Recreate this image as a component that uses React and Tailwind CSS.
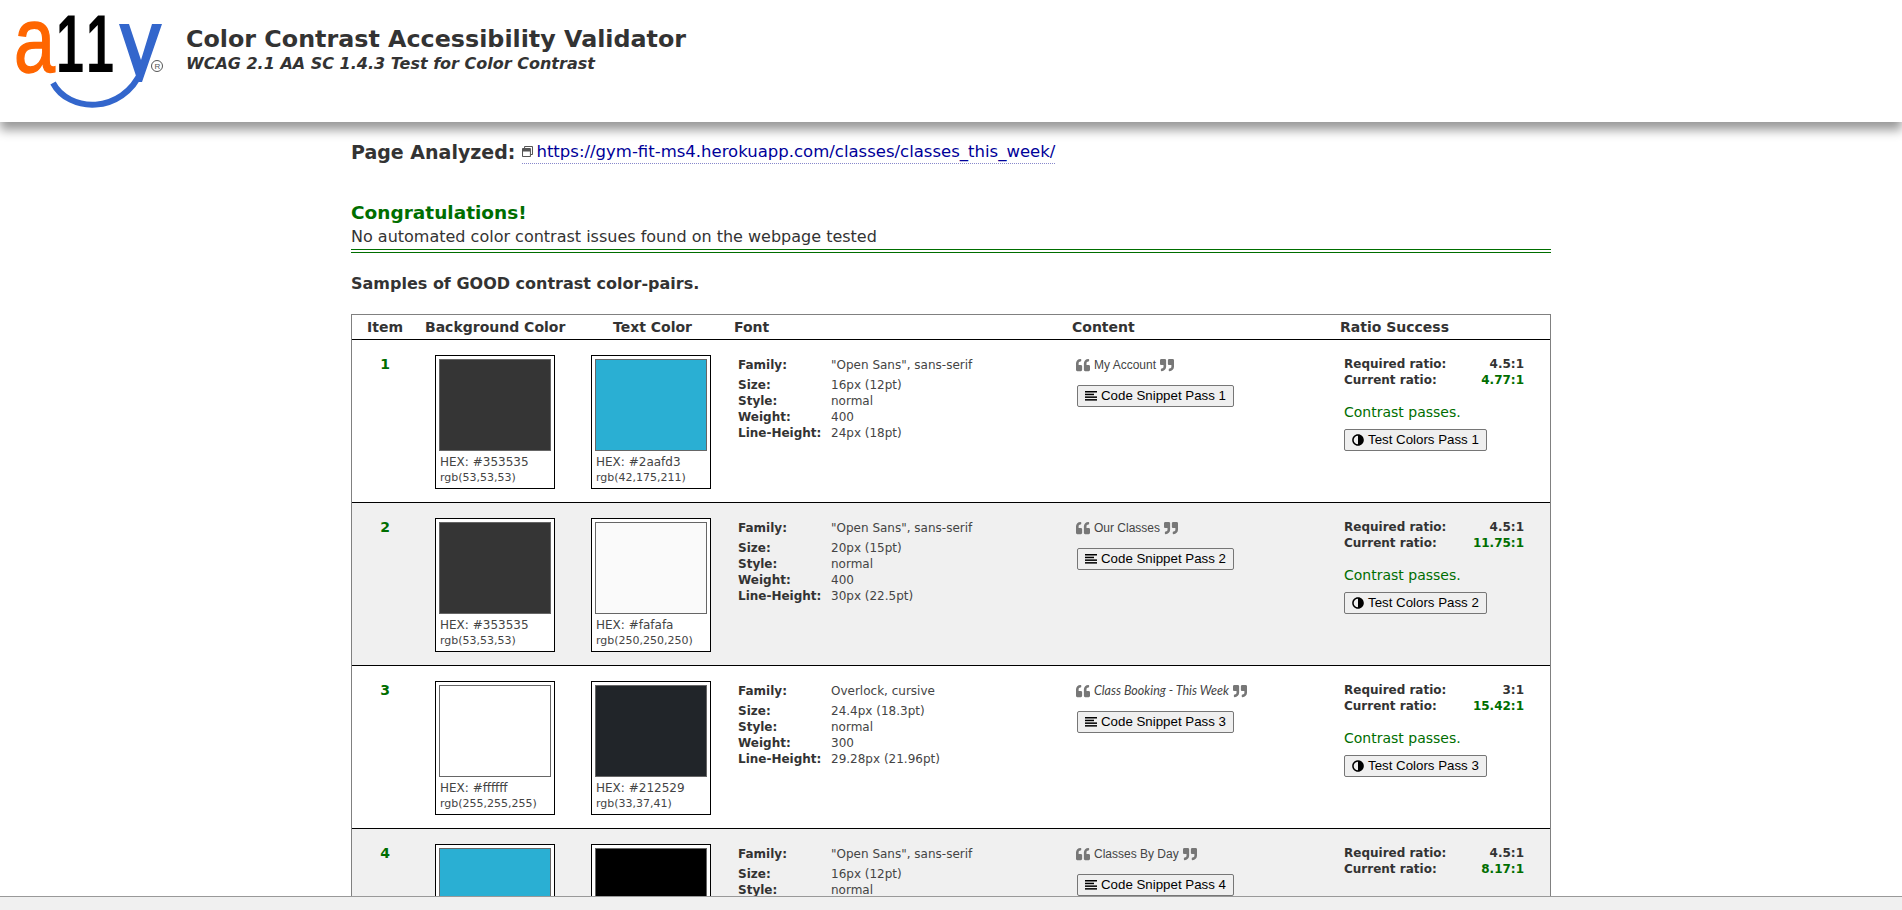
import { FaAdjust, FaQuoteLeft, FaQuoteRight, FaRegWindowRestore } from 'react-icons/fa'

const rows = [
  {
    id: 1,
    bg: { hex: '#353535', rgb: 'rgb(53,53,53)', swatch: 'bg-[#353535]' },
    fg: { hex: '#2aafd3', rgb: 'rgb(42,175,211)', swatch: 'bg-[#2aafd3]' },
    family: '"Open Sans", sans-serif',
    size: '16px (12pt)',
    weight: '400',
    lineHeight: '24px (18pt)',
    content: 'My Account',
    required: '4.5:1',
    current: '4.77:1',
  },
  {
    id: 2,
    bg: { hex: '#353535', rgb: 'rgb(53,53,53)', swatch: 'bg-[#353535]' },
    fg: { hex: '#fafafa', rgb: 'rgb(250,250,250)', swatch: 'bg-[#fafafa]' },
    family: '"Open Sans", sans-serif',
    size: '20px (15pt)',
    weight: '400',
    lineHeight: '30px (22.5pt)',
    content: 'Our Classes',
    required: '4.5:1',
    current: '11.75:1',
  },
  {
    id: 3,
    bg: { hex: '#ffffff', rgb: 'rgb(255,255,255)', swatch: 'bg-[#ffffff]' },
    fg: { hex: '#212529', rgb: 'rgb(33,37,41)', swatch: 'bg-[#212529]' },
    family: 'Overlock, cursive',
    size: '24.4px (18.3pt)',
    weight: '300',
    lineHeight: '29.28px (21.96pt)',
    content: 'Class Booking - This Week',
    cursive: true,
    required: '3:1',
    current: '15.42:1',
  },
  {
    id: 4,
    bg: { hex: '#2aafd3', rgb: 'rgb(42,175,211)', swatch: 'bg-[#2aafd3]' },
    fg: { hex: '#000000', rgb: 'rgb(0,0,0)', swatch: 'bg-[#000000]' },
    family: '"Open Sans", sans-serif',
    size: '16px (12pt)',
    weight: '400',
    lineHeight: '24px (18pt)',
    content: 'Classes By Day',
    required: '4.5:1',
    current: '8.17:1',
  },
]

const Logo = () => (
  <svg width="170" height="112" viewBox="0 0 170 112" className="shrink-0">
    <text x="14" y="72" fontFamily="Liberation Sans" fontSize="92" fill="#ff6600" stroke="#ff6600" strokeWidth="1.5" textLength="41" lengthAdjust="spacingAndGlyphs">a</text>
    <text x="56" y="72" fontFamily="Liberation Sans" fontSize="82" fontWeight="bold" fill="#000" textLength="28" lengthAdjust="spacingAndGlyphs">1</text>
    <text x="86" y="72" fontFamily="Liberation Sans" fontSize="82" fontWeight="bold" fill="#000" textLength="28" lengthAdjust="spacingAndGlyphs">1</text>
    <path d="M119 24 H129 L141 60 L152 24 H162 L142 82 H138 Z" fill="#3366cc" />
    <path d="M53 83 C 68 112, 122 116, 142 70" fill="none" stroke="#3366cc" strokeWidth="6" />
    <circle cx="157" cy="66" r="5.5" fill="none" stroke="#555" strokeWidth="1" />
    <text x="154.5" y="69" fontFamily="Liberation Sans" fontSize="8" fill="#555">R</text>
  </svg>
)

const SnippetIcon = () => (
  <svg width="12" height="10" viewBox="0 0 12 10" className="shrink-0">
    <rect x="0" y="0" width="12" height="1.5" />
    <rect x="0" y="2.7" width="9" height="1.5" />
    <rect x="0" y="5.4" width="12" height="1.5" />
    <rect x="0" y="8.1" width="12" height="1.5" />
  </svg>
)

const ColorCard = ({ color }) => (
  <div className="-mt-[1px] h-[134px] w-[120px] border border-black bg-white px-[3px] pt-[3px]">
    <div className={`h-[92px] border border-[#666] ${color.swatch}`} />
    <div className="mt-[3px] pl-[1px] text-[12px] leading-[16px] text-[#444]">HEX: {color.hex}</div>
    <div className="pl-[1px] text-[11px] leading-[16px] text-[#444]">{color.rgb}</div>
  </div>
)

const FontRow = ({ label, value, className = '' }) => (
  <div className={`flex text-[12px] leading-[16px] ${className}`}>
    <span className="w-[93px] font-bold text-[#333]">{label}</span>
    <span className="text-[#444]">{value}</span>
  </div>
)

const Button = ({ icon, children }) => (
  <button className="flex h-[22px] items-center gap-[4px] rounded-[2px] border border-[#767676] bg-[#efefef] px-[7px] font-['Liberation_Sans',sans-serif] text-[13.3px] text-black">
    {icon}
    {children}
  </button>
)

const Row = ({ row }) => (
  <div className={`grid h-[163px] grid-cols-[83px_156px_147px_338px_268px_1fr] border-b border-black pt-[16px] ${row.id % 2 === 0 ? 'bg-[#f0f0f0]' : 'bg-white'}`}>
    <div className="w-[66px] text-center text-[14px] leading-[16px] font-bold text-[#006e00]">{row.id}</div>
    <ColorCard color={row.bg} />
    <ColorCard color={row.fg} />
    <div className="pt-[1px]">
      <FontRow label="Family:" value={row.family} className="mb-[4px]" />
      <FontRow label="Size:" value={row.size} />
      <FontRow label="Style:" value="normal" />
      <FontRow label="Weight:" value={row.weight} />
      <FontRow label="Line-Height:" value={row.lineHeight} />
    </div>
    <div>
      <div className={`flex h-[18px] items-center gap-[4px] text-[#444] ${row.cursive ? "font-['Lato',sans-serif] text-[12.5px] italic" : "font-['Liberation_Sans',sans-serif] text-[12px]"}`}>
        <FaQuoteLeft className="text-[14px] text-[#777]" />
        <span>{row.content}</span>
        <FaQuoteRight className="text-[14px] text-[#777]" />
      </div>
      <div className="mt-[11px] ml-[1px]">
        <Button icon={<SnippetIcon />}>Code Snippet Pass {row.id}</Button>
      </div>
    </div>
    <div className="w-[180px]">
      <div className="flex justify-between text-[12px] leading-[16px] font-bold text-[#333]">
        <span>Required ratio:</span>
        <span>{row.required}</span>
      </div>
      <div className="flex justify-between text-[12px] leading-[16px] font-bold text-[#333]">
        <span>Current ratio:</span>
        <span className="text-[#006e00]">{row.current}</span>
      </div>
      <p className="mt-[15px] text-[14px] leading-[18px] text-[#006e00]">Contrast passes.</p>
      <div className="mt-[8px]">
        <Button icon={<FaAdjust className="-scale-x-100 text-[12px]" />}>Test Colors Pass {row.id}</Button>
      </div>
    </div>
  </div>
)

export default function App() {
  return (
    <div className="flex h-screen flex-col overflow-hidden bg-white font-['DejaVu_Sans',sans-serif] text-[#333]">
      <header className="relative z-10 flex h-[122px] shrink-0 items-start bg-white shadow-[0_8px_10px_#999]">
        <Logo />
        <div className="ml-[16px] pt-[24px]">
          <h1 className="text-[23.8px] leading-[30px] font-bold text-[#333]">Color Contrast Accessibility Validator</h1>
          <p className="text-[16px] leading-[20px] font-bold italic text-[#333]">WCAG 2.1 AA SC 1.4.3 Test for Color Contrast</p>
        </div>
      </header>
      <main className="mx-auto min-h-0 w-[1200px] flex-1 overflow-hidden">
        <div className="mt-[18px] flex items-center">
          <span className="text-[19px] leading-[24px] font-bold text-[#333]">Page Analyzed:</span>
          <a href="#" className="ml-[7px] flex items-center border-b border-dotted border-[#8888cc] text-[16.5px] leading-[22px] text-[#000099]">
            <FaRegWindowRestore className="mr-[3px] text-[11px] text-[#555]" />
            https://gym-fit-ms4.herokuapp.com/classes/classes_this_week/
          </a>
        </div>
        <h2 className="mt-[35px] text-[18.5px] leading-[28px] font-bold text-[#006e00]">Congratulations!</h2>
        <p className="border-b-[4px] border-double border-[#006e00] pb-[2px] text-[16px] leading-[20px] text-[#333]">No automated color contrast issues found on the webpage tested</p>
        <p className="mt-[21px] text-[16px] leading-[20px] font-bold text-[#333]">Samples of GOOD contrast color-pairs.</p>
        <div className="mt-[20px] border-x border-t border-[#808080]">
          <div className="grid h-[25px] grid-cols-[83px_156px_147px_338px_268px_1fr] items-center border-b border-black pt-[1px] text-[14px] font-bold text-[#333]">
            <span className="w-[66px] text-center">Item</span>
            <span className="-ml-[10px]">Background Color</span>
            <span className="ml-[22px]">Text Color</span>
            <span className="-ml-[4px]">Font</span>
            <span className="-ml-[4px]">Content</span>
            <span className="-ml-[4px]">Ratio Success</span>
          </div>
          {rows.map((row) => <Row key={row.id} row={row} />)}
        </div>
      </main>
      <div className="h-[14px] shrink-0 border-t border-[#999] bg-[#f0f0f0]" />
    </div>
  )
}
